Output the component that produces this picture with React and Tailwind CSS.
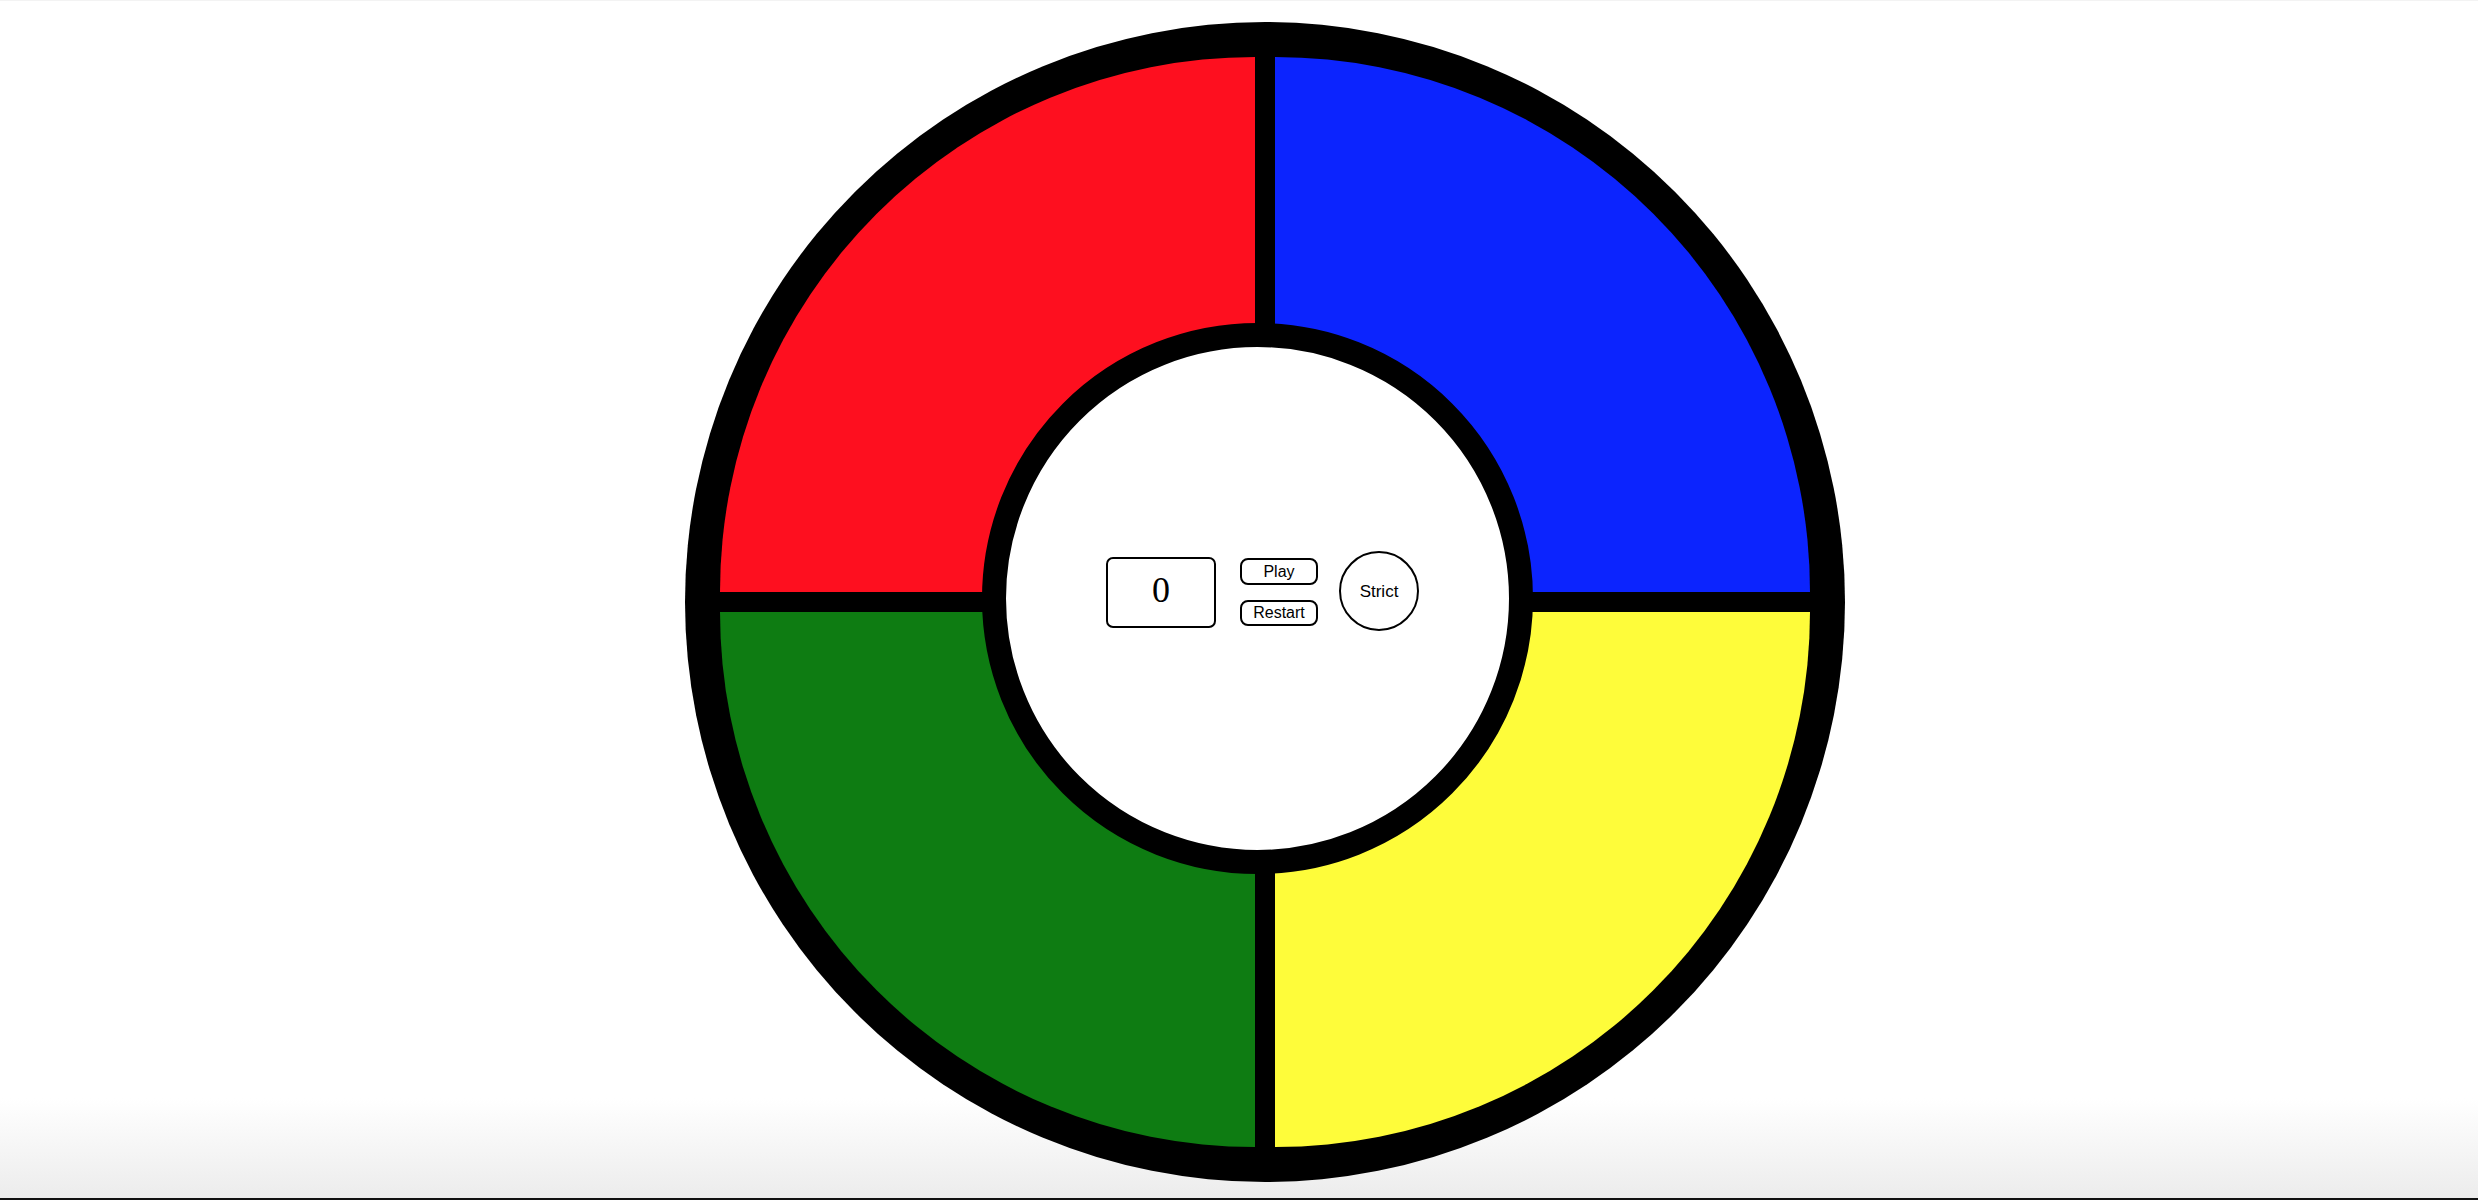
import React, { useState } from "react";

const sans = { fontFamily: '"Liberation Sans", Arial, sans-serif' };

const App = () => {
  const [count] = useState(0);
  const [strict, setStrict] = useState(false);

  return (
    <div className="relative h-[1200px] w-full overflow-hidden bg-white border-t border-[#f3f3f3]">
      {/* window bottom shade, sits behind the board */}
      <div className="pointer-events-none absolute bottom-0 left-0 right-0 z-0 flex flex-col">
        <div className="h-[100px] bg-gradient-to-b from-transparent to-[#ececec]" />
        <div className="h-[2px] bg-[#111]" />
      </div>

      <div className="relative z-10 flex justify-center pt-[21px] pl-[52px]">
        <div className="relative rounded-full bg-black p-[35px]">
          <div className="grid grid-cols-2 gap-[20px]">
            <div className="w-[535px] h-[535px] bg-[#fe0f1f] rounded-tl-full" />
            <div className="w-[535px] h-[535px] bg-[#0c24fe] rounded-tr-full" />
            <div className="w-[535px] h-[535px] bg-[#0e7c12] rounded-bl-full" />
            <div className="w-[535px] h-[535px] bg-[#fefc3a] rounded-br-full" />
          </div>

          {/* center panel */}
          <div className="absolute left-[297px] top-[301px] w-[551px] h-[551px] rounded-full border-[24px] border-black bg-white flex items-center justify-center pl-[10px] pb-[13px]">
            <div className="flex items-center" style={sans}>
              <div className="w-[110px] h-[71px] border-2 border-black rounded-[7px] flex items-center justify-center">
                <span
                  className="text-[36px] leading-none text-black pb-[4px]"
                  style={{ fontFamily: '"Liberation Serif", "Times New Roman", serif' }}
                >
                  {count}
                </span>
              </div>
              <div className="ml-[24px] flex flex-col gap-[15px]">
                <button className="w-[78px] h-[27px] border-2 border-black rounded-[8px] text-[16px] leading-none text-black flex items-center justify-center">
                  Play
                </button>
                <button className="w-[78px] h-[26px] border-2 border-black rounded-[8px] text-[16px] leading-none text-black flex items-center justify-center">
                  Restart
                </button>
              </div>
              <button
                onClick={() => setStrict(!strict)}
                className="ml-[21px] mb-[2px] w-[80px] h-[80px] border-2 border-black rounded-full text-[17px] leading-none text-black flex items-center justify-center"
              >
                Strict
              </button>
            </div>
          </div>
        </div>
      </div>
    </div>
  );
};

export default App;
